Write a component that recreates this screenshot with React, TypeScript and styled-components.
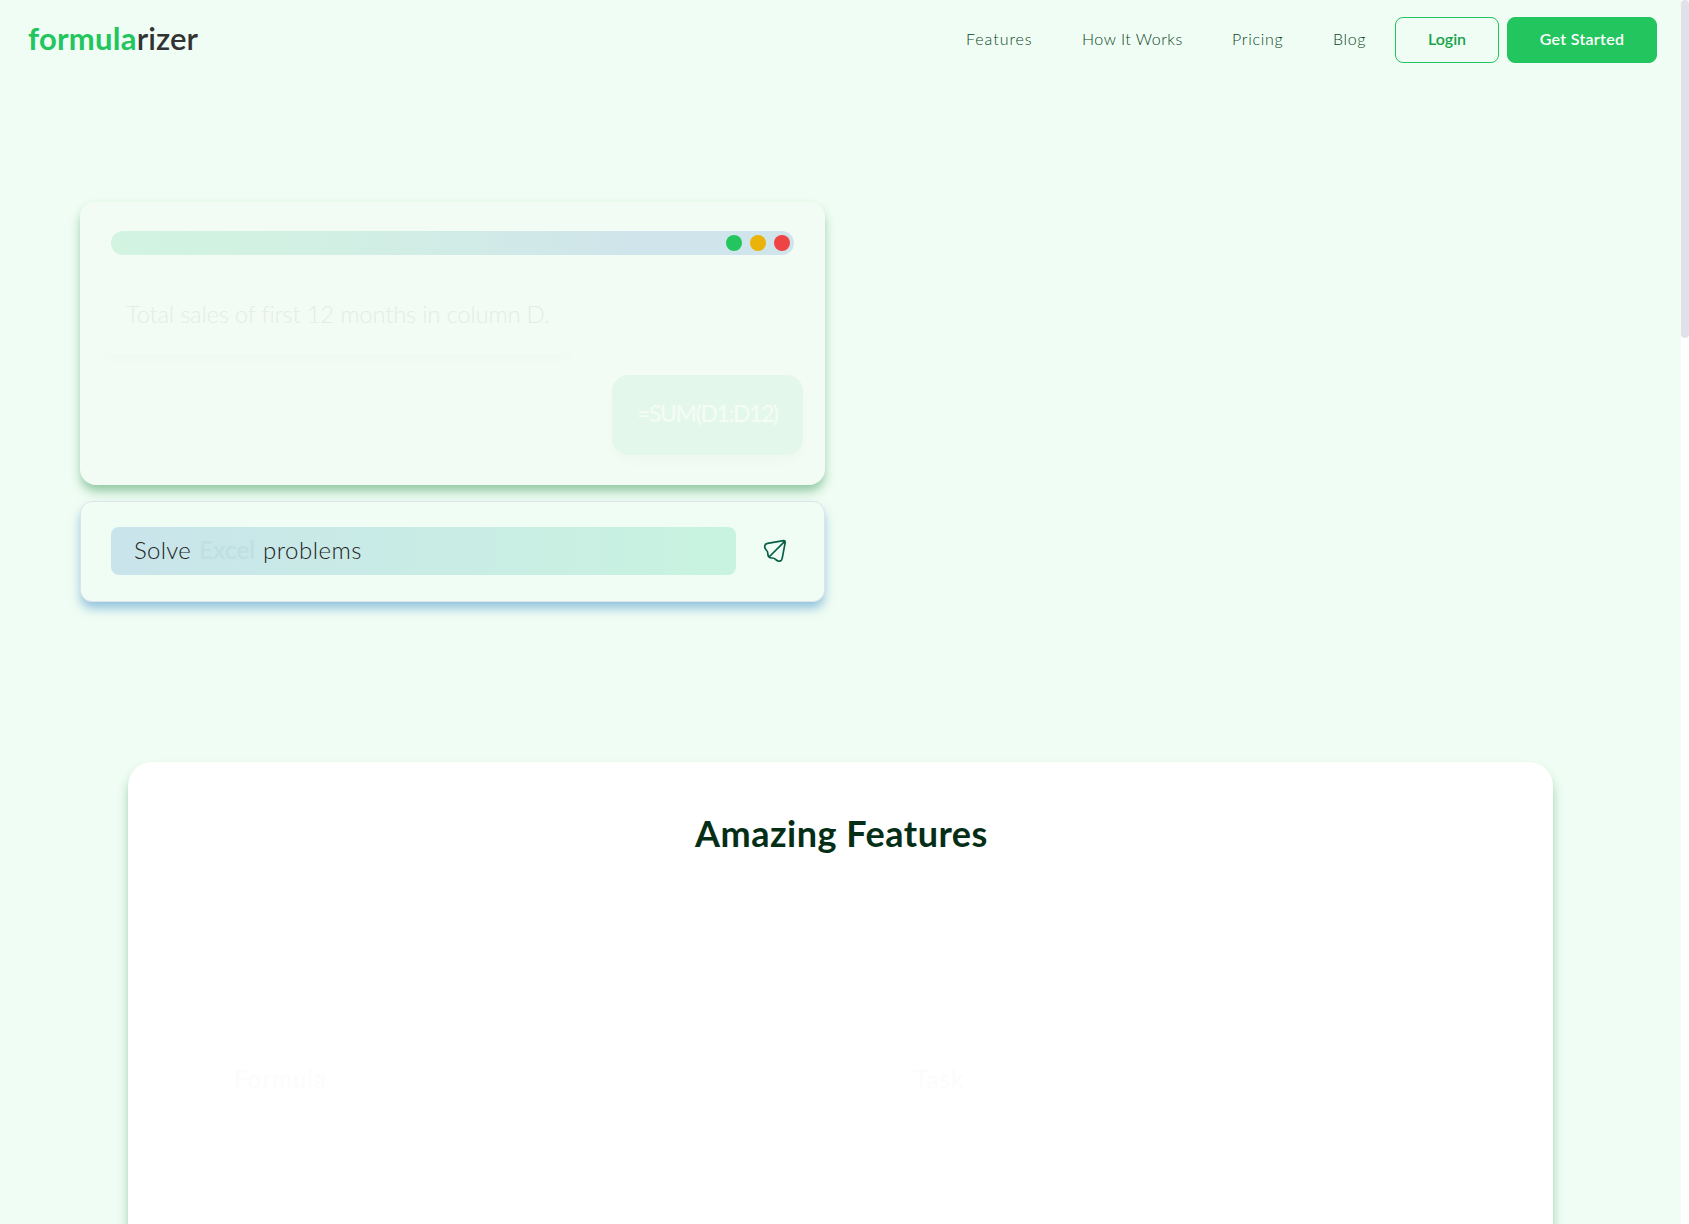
import React from 'react';
import styled, { createGlobalStyle } from 'styled-components';

const Global = createGlobalStyle`
  * { box-sizing: border-box; }
  html, body { margin: 0; height: 1224px; overflow: hidden; background: #f0fdf4; }
  body { font-family: Lato, "Open Sans", sans-serif; }
`;
const Shell = styled.div`display: flex; height: 1224px; overflow: hidden;`;
const Page = styled.div`width: 1681px; flex: none; background: #f0fdf4; height: 1224px; overflow: hidden;`;
const Scroll = styled.div`width: 8px; height: 1224px; background: #fff;`;
const Thumb = styled.div`height: 338px; background: #e1e1ea; border-radius: 4px;`;

const Header = styled.header`
  height: 80px; display: flex; align-items: center; justify-content: space-between;
  padding: 0 24px 0 28px;
`;
const Logo = styled.div`
  font-size: 31px; line-height: 40px; font-weight: 600; letter-spacing: 0.1px; color: #333; margin-top: -4px;
  span { color: #22c55e; font-weight: 700; letter-spacing: 0.25px; }
`;
const Nav = styled.nav`display: flex; align-items: center;`;
const Link = styled.a<{ $w: number; $track: number }>`
  width: ${p => p.$w}px; margin-right: 50px; white-space: nowrap; font-size: 16px; font-weight: 300;
  line-height: 24px; letter-spacing: ${p => p.$track}px; color: #0b4524; padding-bottom: 2px;
  &:last-of-type { margin-right: 29px; }
`;
const Button = styled.button<{ $solid?: boolean; $w: number }>`
  width: ${p => p.$w}px; height: 46px; padding: 0 0 2px; border-radius: 8px;
  border: 1px solid #22c55e; background: ${p => (p.$solid ? '#22c55e' : 'transparent')};
  color: ${p => (p.$solid ? '#fff' : '#16a34a')}; font: 600 16px/24px Lato, sans-serif;
  letter-spacing: ${p => (p.$solid ? 0.3 : 0)}px; margin-right: ${p => (p.$solid ? 0 : 8)}px;
`;

const Hero = styled.section`padding: 121px 0 0 80px; width: 825px; display: flex; flex-direction: column; gap: 16px;`;
const Chat = styled.div`
  height: 284px; border-radius: 16px; background: #f2fcf5; border-top: 1px solid #eafeea;
  box-shadow: 0 7px 11px -1px rgba(34, 140, 70, 0.48); padding: 29px 22px 0 21px;
  display: flex; flex-direction: column;
`;
const TitleBar = styled.div`
  height: 24px; margin: 0 9px 0 10px; border-radius: 12px; padding: 0 4px; display: flex; gap: 8px;
  align-items: center; justify-content: flex-end;
  background: linear-gradient(90deg, #d2f4e0, #d1ede5 45%, #d0e5eb 75%, #d0e4ec);
`;
const Dot = styled.i<{ $c: string }>`width: 16px; height: 16px; border-radius: 50%; background: ${p => p.$c};`;
const Bubble = styled.div<{ $reply?: boolean }>`
  height: 80px; border-radius: 16px; padding: 0 24px 4px 25px; display: flex; align-items: center;
  font-size: ${p => (p.$reply ? 23 : 24)}px; white-space: nowrap; width: ${p => (p.$reply ? 191 : 474)}px;
  margin-top: 20px; align-self: ${p => (p.$reply ? 'flex-end' : 'flex-start')};
  background: ${p => (p.$reply ? '#e4f7eb' : '#f2fcf5')};
  color: ${p => (p.$reply ? '#f3fcf6' : '#e2ede6')};
  font-weight: ${p => (p.$reply ? 500 : 300)};
  letter-spacing: ${p => (p.$reply ? -1.4 : -0.27)}px;
  box-shadow: 0 8px 12px -2px rgba(20, 60, 40, ${p => (p.$reply ? 0.018 : 0.013)});
`;
const Prompt = styled.div`
  height: 101px; border-radius: 12px; background: #f0fdf4; border: 1px solid #e0e4ea;
  box-shadow: 0 7px 11px -1px rgba(60, 140, 200, 0.54); padding: 0 37px 2px 30px;
  display: flex; align-items: center; justify-content: space-between;
`;
const Input = styled.div`
  width: 625px; height: 48px; border-radius: 8px; padding: 0 0 3px 23px; display: flex; align-items: center;
  font-size: 24px; font-weight: 300; color: #1d2321;
  background: linear-gradient(90deg, #c9e4eb, #c9ece5 50%, #c8f3e0);
`;
const Word = styled.span<{ $w: number; $track?: number; $faint?: boolean }>`
  width: ${p => p.$w}px; flex: none; letter-spacing: ${p => p.$track ?? 0}px;
  ${p => p.$faint && 'color: #bfdfe2; font-weight: 600;'}
`;

const Features = styled.section`
  margin: 160px 128px 0; height: 700px; border-radius: 24px; background: #fff; padding-top: 49px;
  box-shadow: 0 8px 12px -1px rgba(34, 140, 70, 0.46);
`;
const Heading = styled.h2`
  margin: 0; padding-left: 2px; text-align: center; font-size: 36px; line-height: 44px; font-weight: 700;
  letter-spacing: 0.5px; color: #052e16;
`;
const Grid = styled.div`display: grid; grid-template-columns: 680px 1fr; padding: 208px 0 0 106px;`;
const Feature = styled.div`font-size: 24px; line-height: 32px; letter-spacing: 1px; font-weight: 500; color: #fcfcfc;`;

export default function App() {
  return (
    <>
      <Global />
      <Shell>
        <Page>
          <Header>
            <Logo><span>formula</span>rizer</Logo>
            <Nav>
              <Link $w={66} $track={0.95}>Features</Link>
              <Link $w={100} $track={0.5}>How It Works</Link>
              <Link $w={51} $track={0.7}>Pricing</Link>
              <Link $w={33} $track={0.6}>Blog</Link>
              <Button $w={104}>Login</Button>
              <Button $w={150} $solid>Get Started</Button>
            </Nav>
          </Header>
          <Hero>
            <Chat>
              <TitleBar>
                <Dot $c="#22c55e" /><Dot $c="#eab308" /><Dot $c="#ef4444" />
              </TitleBar>
              <Bubble>Total sales of first 12 months in column D.</Bubble>
              <Bubble $reply>=SUM(D1:D12)</Bubble>
            </Chat>
            <Prompt>
              <Input>
                <Word $w={65} $track={0.3}>Solve</Word>
                <Word $w={64} $track={0.2} $faint>Excel</Word>
                <Word $w={110} $track={0.5}>problems</Word>
              </Input>
              <svg width="24" height="24" viewBox="0 0 24 24" fill="none" stroke="#065f46" strokeWidth="1.7" strokeLinecap="round" strokeLinejoin="round">
                <path d="M22 2.2 6 18M20.5 1.7 4.5 4.4C1.2 5 .8 8.4 3 10.7C4.3 12 4.8 12.3 4.8 14.5C4.8 17.8 5.8 19 9 19C11.7 19 12 19.7 13.3 21C15.6 23.1 18.6 22.5 19.2 19.4L22.2 3.4C22.4 2.2 21.7 1.5 20.5 1.7Z" />
              </svg>
            </Prompt>
          </Hero>
          <Features>
            <Heading>Amazing Features</Heading>
            <Grid>
              <Feature>Formula</Feature>
              <Feature>Task</Feature>
            </Grid>
          </Features>
        </Page>
        <Scroll><Thumb /></Scroll>
      </Shell>
    </>
  );
}
